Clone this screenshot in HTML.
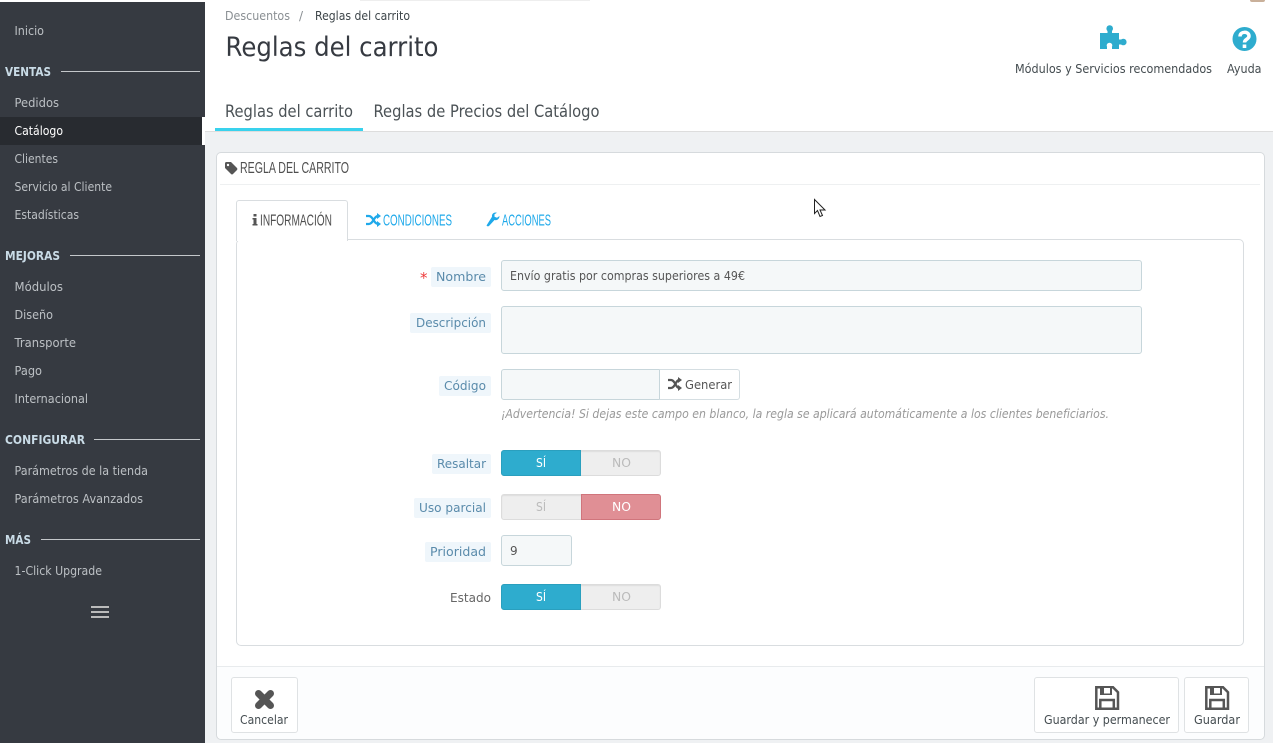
<!DOCTYPE html>
<html lang="es"><head><meta charset="utf-8"><title>Reglas del carrito</title>
<style>
html,body{margin:0;padding:0;width:1273px;height:743px;overflow:hidden;background:#eff1f3}
.b{position:absolute;box-sizing:border-box}
svg{position:absolute;left:0;top:0}
text{font-family:"DejaVu Sans","Liberation Sans",sans-serif;font-size:12px}
.s{fill:#bcc0c4}
.h{fill:#c9dbe6;font-weight:700;font-size:12px}
.l{fill:#5a8bab;font-size:12.5px}
.d{fill:#444c50}
.c{font-family:"Liberation Sans",sans-serif;font-size:15.5px}
.inp{background:#f5f8f9;border:1px solid #c7d6db;border-radius:3px}
.lab{background:#eff6fb;border-radius:2px}
.sw{background:#eee;border:1px solid #dcdcdc;border-radius:3px;box-shadow:inset 0 1px 1px #ddd}
</style></head><body>
<div class="b" style="left:0;top:0;width:1273px;height:132px;background:#fff;border-bottom:1px solid #ddd"></div>
<div class="b" style="left:360px;top:0;width:230px;height:1px;background:#eee"></div>
<div class="b" style="left:1250px;top:0;width:15px;height:2px;background:#c9b09a;border-radius:0 0 7px 7px"></div>
<div class="b" style="left:0;top:2px;width:205px;height:741px;background:#363a41"></div>
<div class="b" style="left:0;top:117px;width:202px;height:28px;background:#282b30"></div>
<div class="b" style="left:202px;top:117px;width:3px;height:28px;background:#fff"></div>
<div class="b" style="left:61px;top:71px;width:139px;height:1px;background:#c4c7ca"></div>
<div class="b" style="left:70px;top:255px;width:130px;height:1px;background:#c4c7ca"></div>
<div class="b" style="left:94px;top:439px;width:106px;height:1px;background:#c4c7ca"></div>
<div class="b" style="left:41px;top:539px;width:159px;height:1px;background:#c4c7ca"></div>
<div class="b" style="left:91px;top:606px;width:18px;height:2px;background:#bbb"></div>
<div class="b" style="left:91px;top:611px;width:18px;height:2px;background:#bbb"></div>
<div class="b" style="left:91px;top:616px;width:18px;height:2px;background:#bbb"></div>
<div class="b" style="left:215px;top:128px;width:148px;height:3px;background:#39d2ed"></div>

<div class="b" style="left:216px;top:152px;width:1049px;height:588px;background:#fff;border:1px solid #d6dadd;border-radius:5px"></div>
<div class="b" style="left:220px;top:184px;width:1040px;height:1px;background:#eef0f1"></div>
<div class="b" style="left:236px;top:239px;width:1008px;height:407px;background:#fff;border:1px solid #d9dde0;border-radius:5px"></div>
<div class="b" style="left:236px;top:200px;width:112px;height:41px;background:#fff;border:1px solid #d9dde0;border-bottom:0;border-radius:3px 3px 0 0"></div>
<div class="b" style="left:217px;top:666px;width:1047px;height:73px;background:#fcfdfe;border-top:1px solid #e8ebed;border-radius:0 0 5px 5px"></div>

<div class="b lab" style="left:431px;top:267px;width:60px;height:20px"></div>
<div class="b lab" style="left:410px;top:313px;width:81px;height:20px"></div>
<div class="b lab" style="left:439px;top:376px;width:52px;height:20px"></div>
<div class="b lab" style="left:432px;top:454px;width:59px;height:20px"></div>
<div class="b lab" style="left:414px;top:498px;width:77px;height:20px"></div>
<div class="b lab" style="left:425px;top:542px;width:66px;height:20px"></div>

<div class="b inp" style="left:501px;top:260px;width:641px;height:31px"></div>
<div class="b inp" style="left:501px;top:306px;width:641px;height:48px"></div>
<div class="b inp" style="left:501px;top:369px;width:159px;height:31px;border-radius:3px 0 0 3px"></div>
<div class="b" style="left:659px;top:369px;width:81px;height:31px;background:#fff;border:1px solid #d5dee2;border-left:1px solid #c7d6db;border-radius:0 3px 3px 0"></div>
<div class="b inp" style="left:501px;top:535px;width:71px;height:31px"></div>

<div class="b sw" style="left:501px;top:450px;width:160px;height:26px"></div>
<div class="b" style="left:501px;top:450px;width:80px;height:26px;background:#2eacce;border:1px solid #2a9fbe;border-radius:3px 0 0 3px"></div>
<div class="b sw" style="left:501px;top:494px;width:160px;height:26px"></div>
<div class="b" style="left:581px;top:494px;width:80px;height:26px;background:#e08f95;border:1px solid #d0757c;border-radius:0 3px 3px 0"></div>
<div class="b sw" style="left:501px;top:584px;width:160px;height:26px"></div>
<div class="b" style="left:501px;top:584px;width:80px;height:26px;background:#2eacce;border:1px solid #2a9fbe;border-radius:3px 0 0 3px"></div>

<div class="b" style="left:231px;top:677px;width:67px;height:56px;background:#fff;border:1px solid #dfe2e4;border-radius:3px"></div>
<div class="b" style="left:1034px;top:677px;width:145px;height:56px;background:#fff;border:1px solid #dfe2e4;border-radius:3px"></div>
<div class="b" style="left:1184px;top:677px;width:65px;height:56px;background:#fff;border:1px solid #dfe2e4;border-radius:3px"></div>

<svg width="1273" height="743" viewBox="0 0 1273 743">
<text class="s" x="14.500" y="35" textLength="29.500" lengthAdjust="spacingAndGlyphs">Inicio</text>
<text class="h" x="5" y="76" textLength="46" lengthAdjust="spacingAndGlyphs">VENTAS</text>
<text class="s" x="14.500" y="107" textLength="44.500" lengthAdjust="spacingAndGlyphs">Pedidos</text>
<text x="14.500" y="135" textLength="48.500" lengthAdjust="spacingAndGlyphs" fill="#fff">Catálogo</text>
<text class="s" x="14.500" y="163" textLength="43.500" lengthAdjust="spacingAndGlyphs">Clientes</text>
<text class="s" x="14.500" y="191" textLength="97.500" lengthAdjust="spacingAndGlyphs">Servicio al Cliente</text>
<text class="s" x="14.500" y="219" textLength="64.500" lengthAdjust="spacingAndGlyphs">Estadísticas</text>
<text class="h" x="5" y="260" textLength="55" lengthAdjust="spacingAndGlyphs">MEJORAS</text>
<text class="s" x="14.500" y="291" textLength="48.500" lengthAdjust="spacingAndGlyphs">Módulos</text>
<text class="s" x="14.500" y="319" textLength="38.500" lengthAdjust="spacingAndGlyphs">Diseño</text>
<text class="s" x="14.500" y="347" textLength="61.500" lengthAdjust="spacingAndGlyphs">Transporte</text>
<text class="s" x="14.500" y="375" textLength="27.500" lengthAdjust="spacingAndGlyphs">Pago</text>
<text class="s" x="14.500" y="403" textLength="73.500" lengthAdjust="spacingAndGlyphs">Internacional</text>
<text class="h" x="5" y="444" textLength="80" lengthAdjust="spacingAndGlyphs">CONFIGURAR</text>
<text class="s" x="14.500" y="475" textLength="133.500" lengthAdjust="spacingAndGlyphs">Parámetros de la tienda</text>
<text class="s" x="14.500" y="503" textLength="128.500" lengthAdjust="spacingAndGlyphs">Parámetros Avanzados</text>
<text class="h" x="5" y="544" textLength="26" lengthAdjust="spacingAndGlyphs">MÁS</text>
<text class="s" x="14.500" y="575" textLength="87.500" lengthAdjust="spacingAndGlyphs">1-Click Upgrade</text>

<text x="225" y="20" textLength="65" lengthAdjust="spacingAndGlyphs" fill="#8a8f93">Descuentos</text>
<text x="299" y="20" fill="#8a8f93">/</text>
<text x="315" y="20" textLength="95" lengthAdjust="spacingAndGlyphs" fill="#3d4549">Reglas del carrito</text>
<text x="225.500" y="56" textLength="213" lengthAdjust="spacingAndGlyphs" fill="#363a41" style="font-size:27px">Reglas del carrito</text>
<text x="225" y="117" textLength="128" lengthAdjust="spacingAndGlyphs" fill="#4b5256" style="font-size:16.500px">Reglas del carrito</text>
<text x="373.500" y="117" textLength="226" lengthAdjust="spacingAndGlyphs" fill="#4b5256" style="font-size:16.500px">Reglas de Precios del Catálogo</text>
<text x="1015" y="73" textLength="197" lengthAdjust="spacingAndGlyphs" class="d">Módulos y Servicios recomendados</text>
<text x="1227" y="73" textLength="34.500" lengthAdjust="spacingAndGlyphs" class="d">Ayuda</text>

<text class="c" x="240" y="173" textLength="109" lengthAdjust="spacingAndGlyphs" fill="#4f4f4f">REGLA DEL CARRITO</text>
<text class="c" x="260" y="225.500" textLength="72" lengthAdjust="spacingAndGlyphs" fill="#4f4f4f">INFORMACIÓN</text>
<text class="c" x="383" y="225.500" textLength="69" lengthAdjust="spacingAndGlyphs" fill="#1fa9ea">CONDICIONES</text>
<text class="c" x="502" y="225.500" textLength="49" lengthAdjust="spacingAndGlyphs" fill="#1fa9ea">ACCIONES</text>

<text x="420" y="283" fill="#ee3b3b" style="font-size:15px">*</text>
<text class="l" x="436" y="281" textLength="50" lengthAdjust="spacingAndGlyphs">Nombre</text>
<text class="l" x="416" y="327" textLength="70" lengthAdjust="spacingAndGlyphs">Descripción</text>
<text class="l" x="444" y="390" textLength="42" lengthAdjust="spacingAndGlyphs">Código</text>
<text class="l" x="437" y="468" textLength="49" lengthAdjust="spacingAndGlyphs">Resaltar</text>
<text class="l" x="419" y="512" textLength="67" lengthAdjust="spacingAndGlyphs">Uso parcial</text>
<text class="l" x="430" y="556" textLength="56" lengthAdjust="spacingAndGlyphs">Prioridad</text>
<text x="450" y="602" textLength="41" lengthAdjust="spacingAndGlyphs" fill="#666" style="font-size:12.500px">Estado</text>

<text x="510" y="280" textLength="235" lengthAdjust="spacingAndGlyphs" fill="#555">Envío gratis por compras superiores a 49€</text>
<text x="685" y="389" textLength="47" lengthAdjust="spacingAndGlyphs" fill="#555">Generar</text>
<text x="501" y="418" textLength="608" lengthAdjust="spacingAndGlyphs" fill="#999" style="font-style:italic">¡Advertencia! Si dejas este campo en blanco, la regla se aplicará automáticamente a los clientes beneficiarios.</text>
<text x="510" y="555" fill="#555">9</text>

<text x="536" y="467" textLength="10" lengthAdjust="spacingAndGlyphs" fill="#fff">SÍ</text>
<text x="612" y="467" textLength="19" lengthAdjust="spacingAndGlyphs" fill="#bbb">NO</text>
<text x="536" y="511" textLength="10" lengthAdjust="spacingAndGlyphs" fill="#bbb">SÍ</text>
<text x="612" y="511" textLength="19" lengthAdjust="spacingAndGlyphs" fill="#fff">NO</text>
<text x="536" y="601" textLength="10" lengthAdjust="spacingAndGlyphs" fill="#fff">SÍ</text>
<text x="612" y="601" textLength="19" lengthAdjust="spacingAndGlyphs" fill="#bbb">NO</text>

<text x="240" y="724" textLength="48" lengthAdjust="spacingAndGlyphs" class="d">Cancelar</text>
<text x="1044" y="724" textLength="126" lengthAdjust="spacingAndGlyphs" class="d">Guardar y permanecer</text>
<text x="1194" y="724" textLength="46" lengthAdjust="spacingAndGlyphs" class="d">Guardar</text>

<!-- puzzle -->
<g fill="#2eacce">
<path d="M1100 33h7.500v-3h4.500v3h7v16h-7v-2h-5v2h-7z"/>
<circle cx="1109.700" cy="28.500" r="3.300"/>
<path d="M1118 39.500h3v5h-3z"/>
<circle cx="1123.300" cy="42" r="3.300"/>
</g>
<circle cx="1109.500" cy="45.500" r="2.800" fill="#fff"/>
<rect x="1107.500" y="46" width="4" height="3.500" fill="#fff"/>
<!-- help -->
<circle cx="1244.500" cy="39" r="12" fill="#2eacce"/>
<path fill="none" stroke="#fff" stroke-width="3.500" d="M1240 36.500c0-5.500 9-5.500 9-0.500 0 3.500-4.500 3-4.500 6.500"/>
<rect x="1242.700" y="44.500" width="3.600" height="3.500" fill="#fff"/>
<!-- tag -->
<path fill="#555" d="M225 163.500a1.500 1.500 0 0 1 1.500-1.500h4.500l6 6a1.500 1.500 0 0 1 0 2l-4 4a1.500 1.500 0 0 1-2 0l-6-6z"/>
<circle cx="228" cy="165" r="1.200" fill="#fff"/>
<!-- info -->
<path fill="#555" d="M253.500 214h3v2.500h-3zM252.500 218h4v6h1v1.500h-5V224h1v-4.500h-1z"/>
<!-- shuffle 1 -->
<g fill="none" stroke="#1fa9ea" stroke-width="2.200">
<path d="M366 216h3c4 0 5 8 9 8h1M366 224h3c4 0 5-8 9-8h1"/></g>
<path fill="#1fa9ea" d="M377 213l4 3-4 3zM377 221l4 3-4 3z"/>
<!-- wrench -->
<path fill="#1fa9ea" d="M486.500 225.500a1.800 1.800 0 0 0 2.500 0.500l5.500-6c2.500 0.800 5-1 5-4l-2.500 1.800-2.500-1 0-2.500 2.500-1.500c-3-1-5.500 1-5 4z"/>
<!-- shuffle 2 -->
<g fill="none" stroke="#555" stroke-width="2.200">
<path d="M668 380h3c4 0 5 8 8 8h0M668 388h3c4 0 5-8 8-8h0"/></g>
<path fill="#555" d="M678 377l4 3-4 3zM678 385l4 3-4 3z"/>
<!-- X -->
<path fill="none" stroke="#555" stroke-width="7" stroke-linecap="round" d="M258.500 693.500l12 12M270.500 693.500l-12 12"/>
<!-- save -->
<path fill="none" stroke="#555" stroke-width="2.500" d="M1096.300 687.300h16.700l5 5v16.500h-21.700z"/>
<path fill="#555" d="M1100 687h12v8h-12z"/><rect x="1104" y="688" width="6" height="5.500" fill="#fff"/>
<path fill="none" stroke="#555" stroke-width="2.500" d="M1100.300 709v-9h13.500v9"/>
<g transform="translate(110 0)">
<path fill="none" stroke="#555" stroke-width="2.500" d="M1096.300 687.300h16.700l5 5v16.500h-21.700z"/>
<path fill="#555" d="M1100 687h12v8h-12z"/><rect x="1104" y="688" width="6" height="5.500" fill="#fff"/>
<path fill="none" stroke="#555" stroke-width="2.500" d="M1100.300 709v-9h13.500v9"/>
</g>
<!-- cursor -->
<path fill="#fff" stroke="#222" stroke-width="1" d="M814.500 199.500v14l3-3 2.500 6 2.500-1-2.500-5.500h5z"/>
</svg>
</body></html>
